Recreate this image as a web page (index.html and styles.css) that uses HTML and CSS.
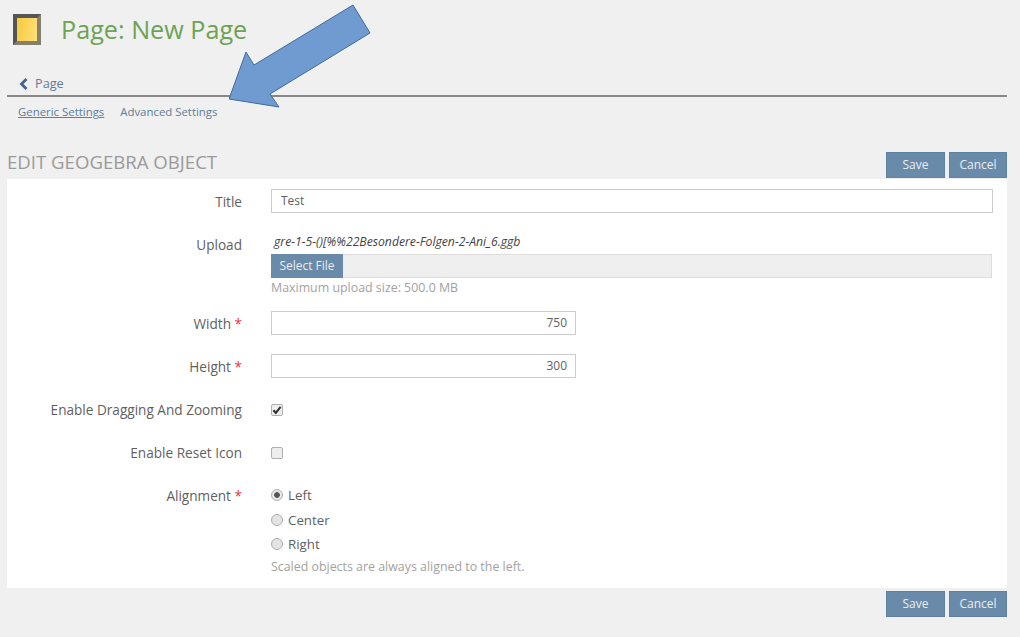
FILE: index.html
```html
<!DOCTYPE html>
<html lang="en">
<head>
    <meta charset="UTF-8" />
    <title>Edit GeoGebra Object</title>
    <link rel="stylesheet" href="styles.css">
</head>
<body>
    <header class="page-head">
        <div class="page-icon"></div>
        <h1>Page: New Page</h1>
    </header>
    <div class="back-tab">
        <a href="#" class="back-link"><svg class="chevron" viewBox="0 0 10 12" width="10" height="12"><path d="M7.5 1 L2.5 6 L7.5 11" fill="none" stroke="#45658a" stroke-width="2.8"/></svg>Page</a>
    </div>
    <nav class="subtabs">
        <a href="#" class="active">Generic Settings</a>
        <a href="#">Advanced Settings</a>
    </nav>
    <div class="form-head">
        <h2>Edit GeoGebra Object</h2>
        <div class="buttons">
            <button type="button" class="btn-save">Save</button>
            <button type="button" class="btn-cancel">Cancel</button>
        </div>
    </div>
    <form class="form-box">
        <div class="row row-title">
            <label>Title</label>
            <div class="field"><input type="text" class="text-wide" value="Test"></div>
        </div>
        <div class="row row-upload">
            <label>Upload</label>
            <div class="field">
                <div class="filename">gre-1-5-()[%%22Besondere-Folgen-2-Ani_6.ggb</div>
                <div class="file-bar"><span class="file-btn">Select File</span></div>
                <div class="help">Maximum upload size: 500.0 MB</div>
            </div>
        </div>
        <div class="row row-num">
            <label>Width <span class="req">*</span></label>
            <div class="field"><input type="text" class="text-num" value="750"></div>
        </div>
        <div class="row row-num">
            <label>Height <span class="req">*</span></label>
            <div class="field"><input type="text" class="text-num" value="300"></div>
        </div>
        <div class="row row-check">
            <label>Enable Dragging And Zooming</label>
            <div class="field"><span class="check"><svg viewBox="0 0 12 12" width="12" height="12"><path d="M2.4 6.2 L4.8 8.8 L9.6 2.8" fill="none" stroke="#333" stroke-width="2.1"/></svg></span></div>
        </div>
        <div class="row row-check">
            <label>Enable Reset Icon</label>
            <div class="field"><span class="check"></span></div>
        </div>
        <div class="row row-radio">
            <label>Alignment <span class="req">*</span></label>
            <div class="field">
                <div class="radio-line"><span class="radio on"></span>Left</div>
                <div class="radio-line"><span class="radio"></span>Center</div>
                <div class="radio-line"><span class="radio"></span>Right</div>
                <div class="help">Scaled objects are always aligned to the left.</div>
            </div>
        </div>
    </form>
    <div class="form-foot">
        <div class="buttons">
            <button type="button" class="btn-save">Save</button>
            <button type="button" class="btn-cancel">Cancel</button>
        </div>
    </div>
    <svg class="arrow" viewBox="0 0 150 110" width="150" height="110">
        <path d="M124 5 L141 33 L41 94 L50 107 L0 99 L17 52 L25 65 Z" fill="#6f9bd0" stroke="#3f6a9c" stroke-width="1"/>
    </svg>
</body>
</html>
```

FILE: styles.css
```css
html, body {
    height: 100%;
}
body {
    margin: 0;
    padding: 0 13px 0 7px;
    background: #f0f0f0;
    font-family: "Open Sans", sans-serif;
    font-size: 13px;
    color: #5f5f5f;
    position: relative;
    overflow: hidden;
}
.page-head {
    display: flex;
    align-items: center;
    gap: 20px;
    padding: 14px 0 0 6px;
    height: 30px;
}
.page-icon {
    width: 20px;
    height: 23px;
    background: linear-gradient(100deg, #f8c93e, #ffe07a);
    border: 4px solid #666;
    border-color: #555 #857f70 #857f70 #555;
}
h1 {
    margin: 0;
    font-size: 25.2px;
    font-weight: 400;
    color: #6ea354;
}
.back-tab {
    margin-top: 29px;
    height: 22px;
    padding-left: 12px;
    border-bottom: 2px solid #888;
    line-height: 21px;
}
.back-link {
    color: #5f7c99;
    text-decoration: none;
    font-size: 12.7px;
    display: inline-flex;
    align-items: center;
    gap: 6px;
}
.subtabs {
    display: flex;
    gap: 16px;
    padding: 6px 0 0 11px;
    font-size: 11.4px;
    line-height: 18px;
}
.subtabs a {
    color: #5f7c99;
    text-decoration: none;
}
.subtabs a.active {
    text-decoration: underline;
}
.form-head {
    display: flex;
    justify-content: space-between;
    align-items: flex-end;
    margin-top: 24px;
    margin-bottom: 1px;
    height: 33px;
}
h2 {
    margin: 0 0 5px;
    font-size: 18.6px;
    font-weight: 400;
    text-transform: uppercase;
    color: #9a9a9a;
    line-height: 23px;
}
.buttons {
    display: flex;
    gap: 4px;
}
button {
    height: 26px;
    padding: 0 0 2px;
    border: 1px solid #5d81a3;
    background: #6a8aaa;
    color: #e8edf2;
    font-family: inherit;
    font-size: 12px;
}
.btn-save {
    width: 59px;
}
.btn-cancel {
    width: 58px;
}
.form-box {
    background: #fff;
    height: 399px;
    padding-top: 10px;
}
.row {
    display: flex;
}
.row label {
    width: 235px;
    padding-top: 4px;
    text-align: right;
    font-size: 13.6px;
    line-height: 18px;
    flex: none;
}
.req {
    color: #e8344a;
}
.field {
    margin-left: 29px;
    flex: 1;
}
input[type="text"] {
    box-sizing: border-box;
    height: 24px;
    border: 1px solid #ccc;
    padding: 0 8px 2px 9px;
    font-family: inherit;
    font-size: 12px;
    color: #5f5f5f;
    display: block;
}
.text-wide {
    width: 722px;
}
.text-num {
    width: 305px;
    text-align: right;
}
.row-title {
    height: 43px;
}
.row-upload {
    height: 79px;
}
.filename {
    font-style: italic;
    font-size: 12.2px;
    line-height: 18px;
    padding: 1px 0 0 3px;
    color: #444;
}
.file-bar {
    height: 24px;
    width: 721px;
    margin-top: 3px;
    background: #efefef;
    border: 1px solid #ddd;
    box-sizing: border-box;
}
.file-btn {
    display: block;
    width: 72px;
    height: 24px;
    margin: -1px;
    background: #6a8aaa;
    color: #e8edf2;
    font-size: 12px;
    line-height: 24px;
    text-align: center;
}
.help {
    font-size: 12.4px;
    line-height: 18px;
    margin-top: 1px;
    color: #a2a2a2;
}
.row-num {
    height: 43px;
}
.row-check {
    height: 43px;
}
.check {
    display: block;
    box-sizing: border-box;
    width: 12px;
    height: 12px;
    margin-top: 7px;
    border: 1px solid #b0b0b0;
    border-radius: 2px;
    background: #eee;
    line-height: 0;
}
.check svg {
    margin: -1px;
}
.radio-line {
    display: flex;
    align-items: center;
    gap: 5px;
    height: 24.5px;
    font-size: 13.3px;
}
.radio {
    box-sizing: border-box;
    width: 12px;
    height: 12px;
    border: 1px solid #b0b0b0;
    border-radius: 50%;
    background: #e4e4e4;
}
.radio.on {
    background: radial-gradient(circle, #555 0 2.5px, #e8e8e8 3.2px);
}
.form-foot {
    display: flex;
    justify-content: flex-end;
    margin-top: 3px;
}
/* annotation drawn over the screenshot */
.arrow {
    position: absolute;
    left: 229px;
    top: 0;
}
```
